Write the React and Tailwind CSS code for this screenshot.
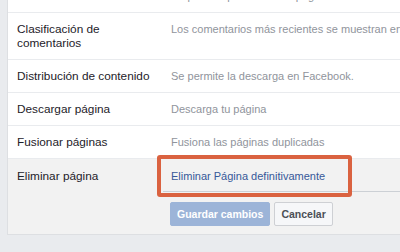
export default function App() {
  const rows = [
    { label: "Clasificación de comentarios", value: "Los comentarios más recientes se muestran en primer lugar.", wrap: true },
    { label: "Distribución de contenido", value: "Se permite la descarga en Facebook." },
    { label: "Descargar página", value: "Descarga tu página" },
    { label: "Fusionar páginas", value: "Fusiona las páginas duplicadas" },
  ];

  return (
    <div
      className="relative w-[400px] h-[252px] overflow-hidden bg-[#e9ebee] pl-[7px] leading-[14px]"
      style={{ fontFamily: '"Liberation Sans", Arial, sans-serif' }}
    >
      <div className="-mt-[20px] w-[420px] bg-white border-l border-b border-[#dddfe2]">
        {/* Partially visible row */}
        <div className="flex border-b border-[#e9ebee]">
          <div className="w-[163px] shrink-0 pl-[9px] py-[9px] text-[11.8px] text-[#1d2129]">Publicaciones</div>
          <div className="py-[9px] text-[11px] text-[#90949c] whitespace-nowrap">Se pueden publicar en la página</div>
        </div>

        {rows.map((r) => (
          <div key={r.label} className="flex border-b border-[#e9ebee]">
            <div className="w-[163px] shrink-0 pl-[9px] py-[9px] text-[11.8px] text-[#1d2129] whitespace-nowrap">
              {r.wrap ? (
                <>
                  Clasificación de
                  <br />
                  comentarios
                </>
              ) : (
                r.label
              )}
            </div>
            <div className="py-[9px] text-[11px] text-[#90949c] whitespace-nowrap">{r.value}</div>
          </div>
        ))}

        {/* Editing row */}
        <div className="flex bg-[#f2f2f2] pb-[8px]">
          <div className="w-[155px] shrink-0 pl-[9px] pt-[10px] text-[11.8px] text-[#1d2129]">Eliminar página</div>
          <div className="flex-1">
            <div className="pl-[8px] pt-[10px] pb-[8px] border-b border-[#ccd0d5] text-[11px]">
              <a className="text-[#365899]">Eliminar Página definitivamente</a>
            </div>
            <div className="flex gap-[4px] pl-[7px] mt-[10px] text-[10.5px]">
              <button className="h-[24px] px-[6px] rounded-[2px] bg-[#9cb4d8] border border-[#9cb4d8] text-white font-bold">
                Guardar cambios
              </button>
              <button className="h-[24px] px-[6px] rounded-[2px] bg-[#f6f7f9] border border-[#ced0d4] text-[#4b4f56] font-bold">
                Cancelar
              </button>
            </div>
          </div>
        </div>
      </div>

      {/* Highlight annotation */}
      <div className="absolute left-[157px] top-[155px] w-[195px] h-[42px] border-4 border-[#da6240] rounded-[3px]" />
    </div>
  );
}
